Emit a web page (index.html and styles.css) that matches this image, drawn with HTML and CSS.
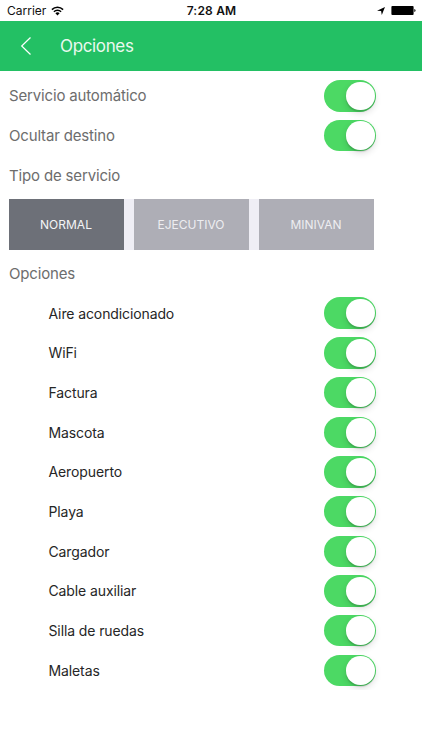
FILE: index.html
```html
<!DOCTYPE html>
<html lang="es">
<head>
    <meta charset="UTF-8">
    <meta name="viewport" content="width=device-width, initial-scale=1.0">
    <title>Opciones</title>
    <link rel="stylesheet" href="styles.css">
</head>
<body>
    <div class="status-bar">
        <div class="status-left">
            <span>Carrier</span>
            <svg class="wifi" width="13" height="10" viewBox="0 0 13 10">
                <path d="M0.9 3.6a8 8 0 0 1 11.2 0M2.9 5.7a5.1 5.1 0 0 1 7.2 0" fill="none" stroke="#000" stroke-width="1.5"/>
                <path d="M4.4 7.2a3 3 0 0 1 4.2 0L6.5 9.4z"/>
            </svg>
        </div>
        <div class="status-time">7:28 AM</div>
        <div class="status-right">
            <svg width="8" height="8" viewBox="0 0 8 8">
                <path d="M8 0L4.8 8L4.1 4.1L0 3.7z"/>
            </svg>
            <svg width="25" height="9" viewBox="0 0 25 9">
                <rect x="0.4" y="0" width="22.2" height="9" rx="1"/>
                <path d="M23.3 3v3q1.2-.4 1.2-1.5T23.3 3z"/>
            </svg>
        </div>
    </div>

    <header class="nav-bar">
        <svg class="back" width="12" height="20" viewBox="0 0 12 20">
            <path d="M10.5 1.5L1.7 10l8.8 8.5" fill="none" stroke="#fff" stroke-width="1.2"/>
        </svg>
        <h1>Opciones</h1>
    </header>

    <main class="settings">
        <div class="row"><span class="label">Servicio automático</span><div class="switch"></div></div>
        <div class="row"><span class="label">Ocultar destino</span><div class="switch"></div></div>
        <div class="row"><span class="label">Tipo de servicio</span></div>

        <div class="segments">
            <div class="segment active">NORMAL</div>
            <div class="segment">EJECUTIVO</div>
            <div class="segment">MINIVAN</div>
        </div>

        <div class="row"><span class="label">Opciones</span></div>

        <div class="row option"><span>Aire acondicionado</span><div class="switch"></div></div>
        <div class="row option"><span>WiFi</span><div class="switch"></div></div>
        <div class="row option"><span>Factura</span><div class="switch"></div></div>
        <div class="row option"><span>Mascota</span><div class="switch"></div></div>
        <div class="row option"><span>Aeropuerto</span><div class="switch"></div></div>
        <div class="row option"><span>Playa</span><div class="switch"></div></div>
        <div class="row option"><span>Cargador</span><div class="switch"></div></div>
        <div class="row option"><span>Cable auxiliar</span><div class="switch"></div></div>
        <div class="row option"><span>Silla de ruedas</span><div class="switch"></div></div>
        <div class="row option"><span>Maletas</span><div class="switch"></div></div>
    </main>
</body>
</html>
```

FILE: styles.css
```css
* {
    margin: 0;
    padding: 0;
    box-sizing: border-box;
}

body {
    background-color: #fff;
    color: #262626;
    font-family: "Inter", sans-serif;
    white-space: nowrap;
}

svg {
    display: block;
}

.status-bar {
    display: flex;
    align-items: center;
    height: 21px;
    padding: 0 6px 0 7px;
    font-size: 12px;
    color: #111;
}

.status-left,
.status-right {
    flex: 1;
    display: flex;
    align-items: center;
}

.status-left {
    gap: 5px;
}

.status-right {
    justify-content: flex-end;
    gap: 6px;
}

.status-time {
    font-weight: 600;
    letter-spacing: 0.2px;
}

.nav-bar {
    display: flex;
    align-items: center;
    height: 50.4px;
    padding-left: 20px;
    background-color: #23c064;
}

h1 {
    margin-left: 28px;
    font-size: 17px;
    font-weight: 400;
    letter-spacing: -0.35px;
    color: #e9f9ef;
}

.settings {
    padding: 4.6px 46px 0 9px;
}

.row {
    display: flex;
    align-items: center;
    justify-content: space-between;
    height: 39.7px;
}

.label {
    font-size: 15px;
    letter-spacing: -0.16px;
    color: #6d6d6d;
}

.option {
    padding-left: 39.5px;
    font-size: 14px;
    letter-spacing: -0.11px;
}

.switch {
    display: flex;
    justify-content: flex-end;
    align-items: center;
    width: 52px;
    height: 31.4px;
    padding-right: 1.5px;
    border-radius: 16px;
    background-color: #4cd964;
}

.switch::after {
    content: "";
    width: 28.6px;
    height: 28.6px;
    border-radius: 50%;
    background-color: #fff;
    box-shadow: 0 3px 7px rgba(0, 0, 0, 0.14), 0 2px 1px rgba(0, 0, 0, 0.12);
}

.segments {
    display: flex;
    gap: 10px;
    width: 365px;
    height: 51px;
    margin: 3.6px 0 4px -0.5px;
    background-color: #efeef5;
}

.segment {
    flex: 1;
    display: flex;
    align-items: center;
    justify-content: center;
    background-color: #aeaeb6;
    color: #ededf1;
    font-size: 12px;
}

.segment.active {
    background-color: #6d7078;
    color: #f4f4f6;
}
```
